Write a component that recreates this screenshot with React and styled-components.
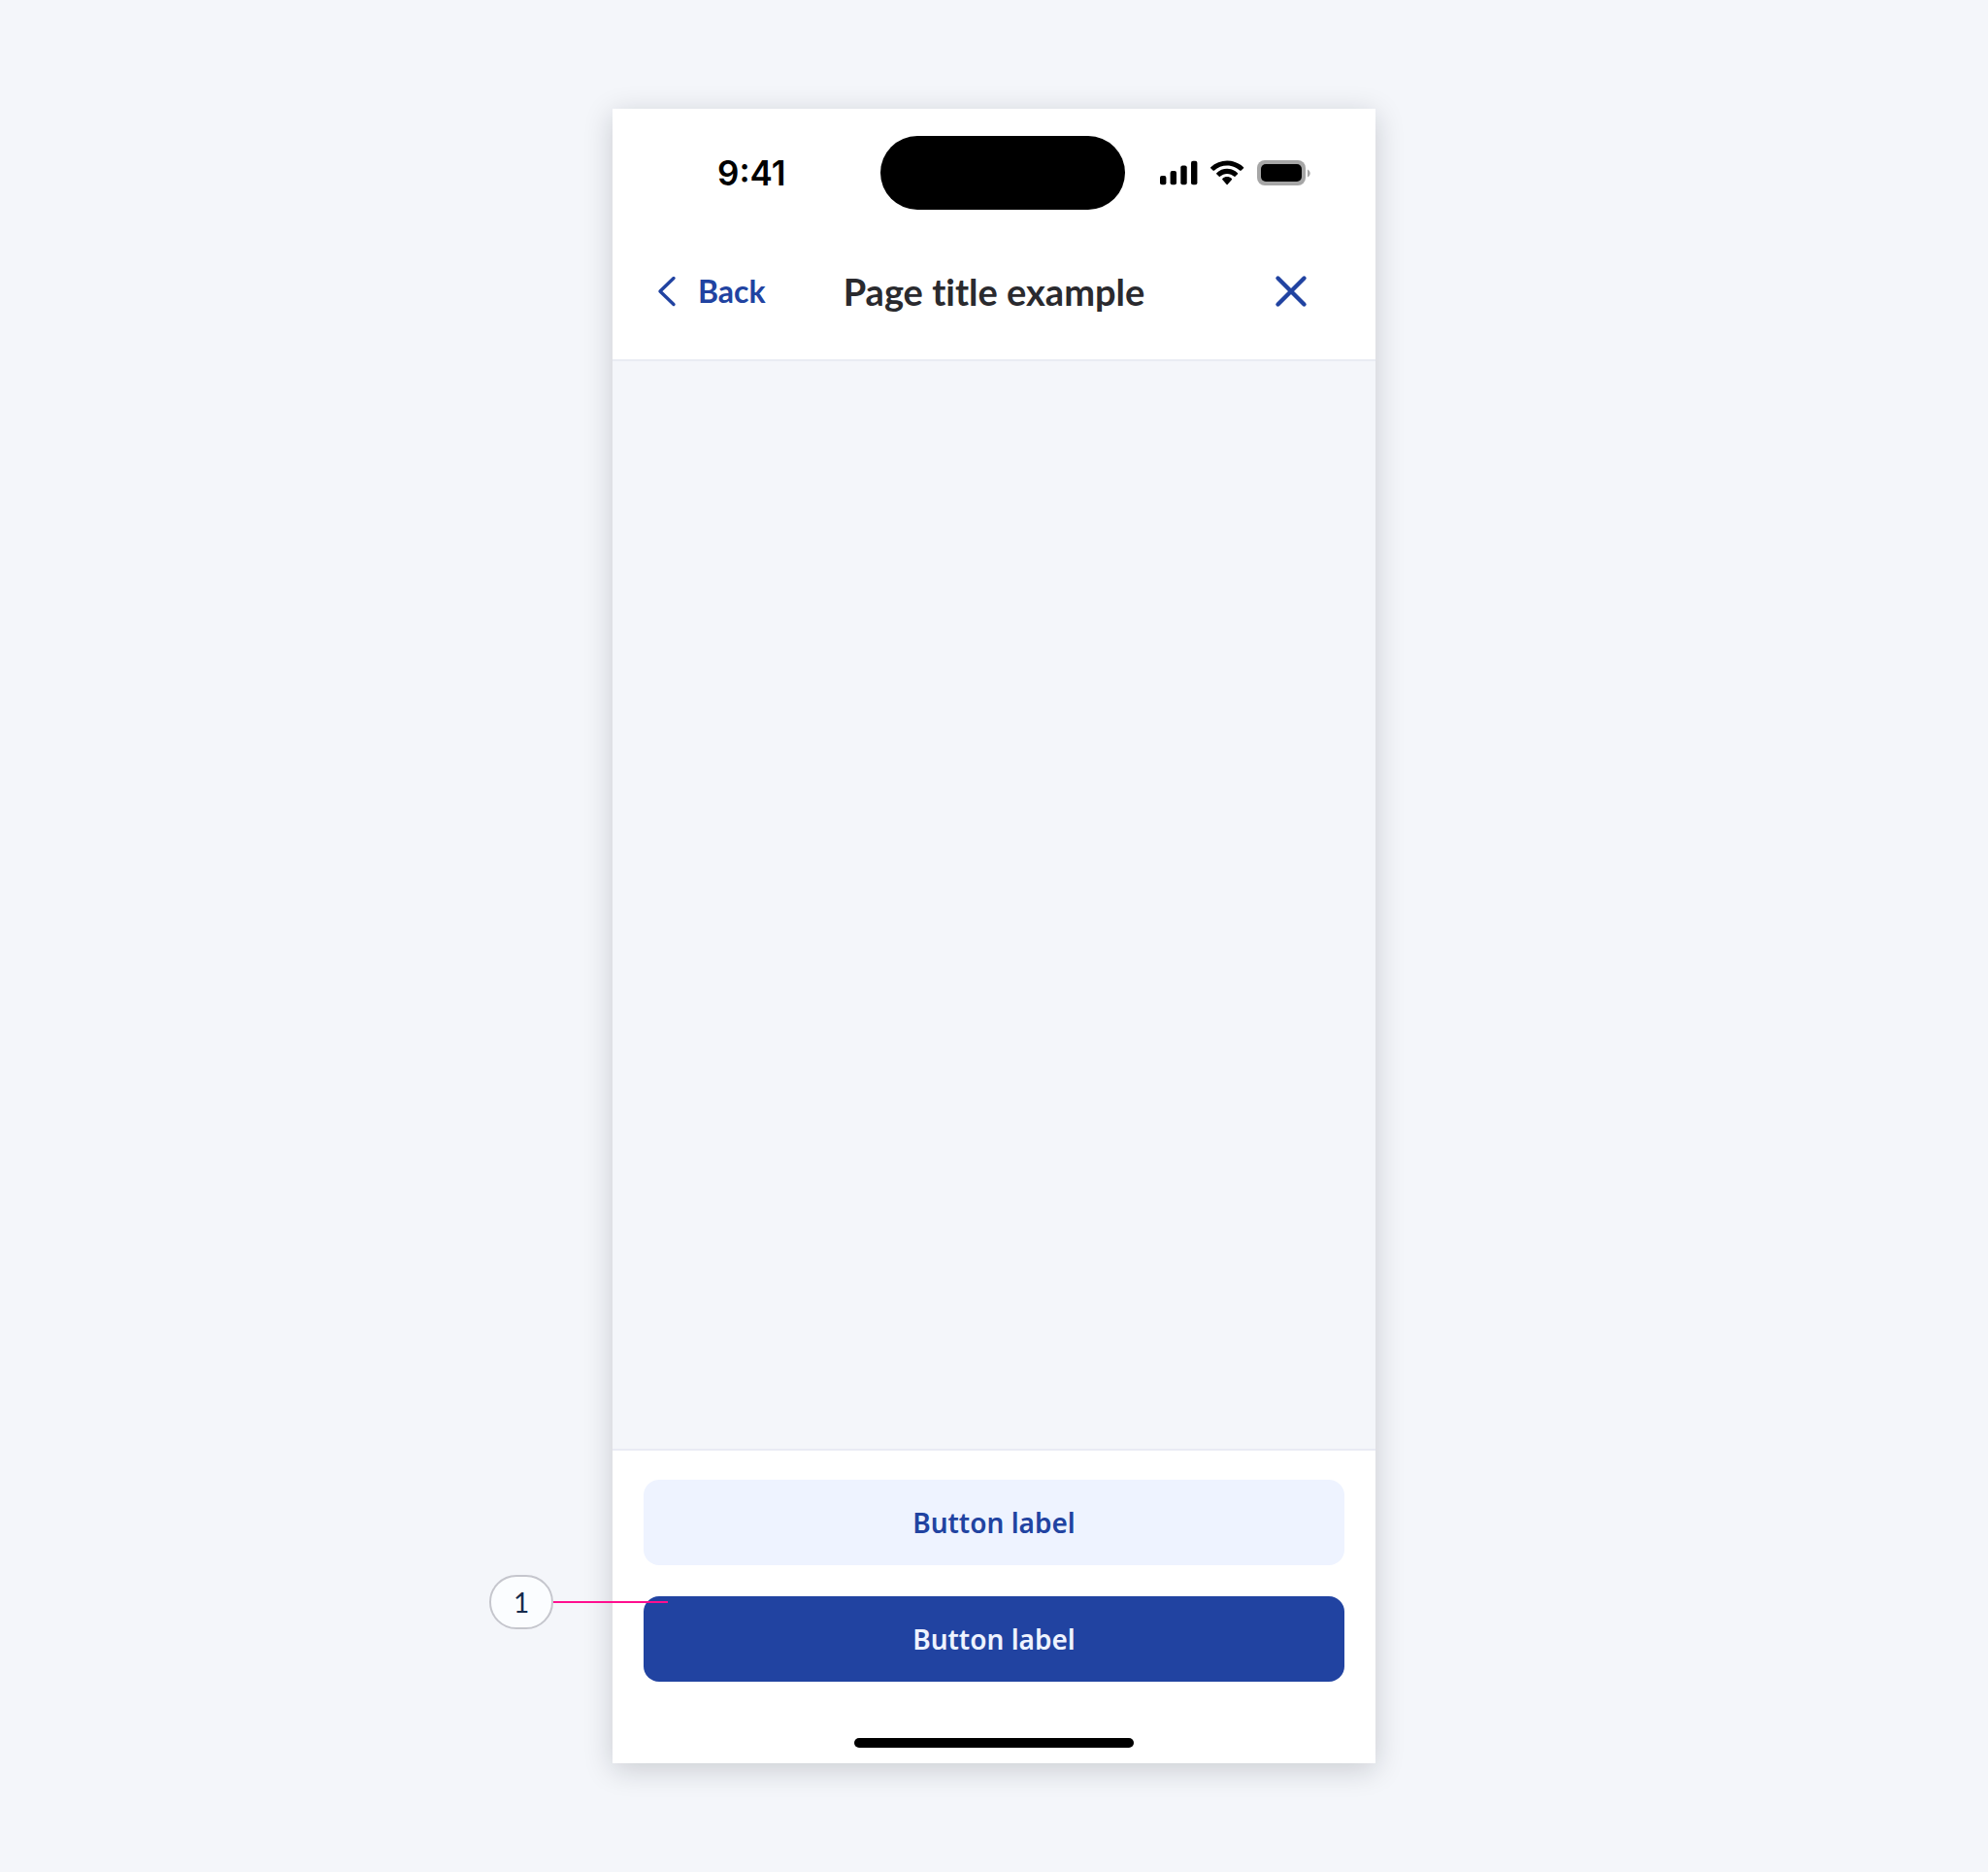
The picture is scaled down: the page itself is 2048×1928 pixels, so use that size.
import styled, { createGlobalStyle } from "styled-components";

const GlobalStyle = createGlobalStyle`
	* {
		box-sizing: border-box;
	}

	body {
		margin: 0;
		background-color: #f4f6fa;
		font-family: "Noto Sans", sans-serif;
	}
`;

const Page = styled.div`
	min-height: 100vh;
	padding: 112px 24px;
	display: flex;
	justify-content: center;
`;

const Phone = styled.main`
	width: 100%;
	max-width: 786px;
	display: flex;
	flex-direction: column;
	background-color: #f4f6fa;
	box-shadow: 0 6px 28px rgba(18, 22, 32, 0.19);
`;

const Header = styled.header`
	background-color: white;
	border-bottom: 2px solid #e9ecf3;
`;

const StatusBar = styled.div`
	display: grid;
	grid-template-columns: 276fr 252px 258fr;
	align-items: center;
	padding: 28px 0 14px;
`;

const Time = styled.time`
	padding-left: 108px;
	font-family: Inter, sans-serif;
	font-size: 35px;
	line-height: 40px;
	font-weight: 600;
	color: black;
`;

const Island = styled.div`
	height: 76px;
	border-radius: 38px;
	background-color: black;
`;

const StatusIcons = styled.div`
	display: flex;
	align-items: center;
	justify-content: flex-end;
	gap: 13px;
	padding-right: 67px;
`;

const NavBar = styled.nav`
	height: 140px;
	display: grid;
	grid-template-columns: 1fr auto 1fr;
	align-items: center;
	padding: 0 46px;
`;

const Title = styled.h1`
	margin: 0;
	font-family: Lato, sans-serif;
	font-size: 38px;
	line-height: 44px;
	font-weight: 700;
	font-variant-ligatures: none;
	color: #2a2a2e;
`;

const NavButton = styled.button`
	display: flex;
	align-items: center;
	gap: 22px;
	padding: 0;
	border: none;
	background: none;
	font-family: Lato, sans-serif;
	font-size: 32px;
	line-height: 40px;
	font-weight: 700;
	color: #2143a1;
	cursor: pointer;
`;

const CloseButton = styled(NavButton)`
	justify-self: end;
	padding-right: 23px;
`;

const Content = styled.section`
	flex: 1;
`;

const Footer = styled.footer`
	display: flex;
	flex-direction: column;
	gap: 32px;
	padding: 30px 32px 16px;
	background-color: white;
	border-top: 2px solid #e9ebf4;
`;

const ButtonSlot = styled.div`
	position: relative;
`;

const Button = styled.button`
	display: block;
	width: 100%;
	height: 88px;
	border: none;
	border-radius: 16px;
	background-color: ${(props) => (props.$primary ? "#2143a1" : "#eef3ff")};
	color: ${(props) => (props.$primary ? "#eef3ff" : "#2143a1")};
	font-family: "Noto Sans", sans-serif;
	font-size: 28px;
	line-height: 40px;
	font-weight: 600;
	cursor: pointer;
`;

const HomeIndicator = styled.div`
	width: 288px;
	height: 10px;
	margin: 26px auto 0;
	border-radius: 5px;
	background-color: black;
`;

const Callout = styled.div`
	position: absolute;
	top: -22px;
	left: -159px;
	display: flex;
	align-items: center;
`;

const CalloutNumber = styled.span`
	width: 66px;
	height: 56px;
	display: flex;
	align-items: center;
	justify-content: center;
	border: 2px solid #c5c6cd;
	border-radius: 28px;
	background-color: #fbfdff;
	font-family: Lato, sans-serif;
	font-size: 28px;
	line-height: 32px;
	color: #172b4d;
`;

const CalloutLine = styled.span`
	width: 118px;
	height: 2px;
	background-color: #ff0f8f;
`;

const SignalIcon = () => (
	<svg width="39" height="26" viewBox="0 0 39 26" aria-hidden="true">
		<rect x="0" y="16" width="6.4" height="9.2" rx="2" />
		<rect x="10.6" y="11" width="6.4" height="14.2" rx="2" />
		<rect x="21.3" y="5.6" width="6.4" height="19.6" rx="2" />
		<rect x="32" y="0.8" width="6.4" height="24.4" rx="2" />
	</svg>
);

const WifiIcon = () => (
	<svg width="35" height="26" viewBox="0 -0.3 17.5 13" aria-hidden="true">
		<path d="M8.5713 2.46628C11.0584 2.46639 13.4504 3.38847 15.2529 5.04195C15.3887 5.16961 15.6056 5.168 15.7393 5.03834L17.0368 3.77487C17.1045 3.70911 17.1422 3.62004 17.1417 3.52735C17.1411 3.43467 17.1023 3.34603 17.0338 3.28104C12.3028 -1.09368 4.83907 -1.09368 0.108056 3.28104C0.039524 3.34598 0.00064 3.4346 0 3.52728C-0.00062 3.61996 0.037048 3.70906 0.104689 3.77487L1.40255 5.03834C1.53615 5.1682 1.75327 5.16981 1.88893 5.04195C3.69167 3.38836 6.08395 2.46628 8.5713 2.46628Z" />
		<path d="M8.56795 6.68656C9.92527 6.68647 11.2341 7.19821 12.2403 8.12234C12.3763 8.25347 12.5907 8.25063 12.7234 8.11594L14.0106 6.79642C14.0784 6.72725 14.116 6.63332 14.1151 6.53578C14.1141 6.43824 14.0746 6.34519 14.0055 6.27738C10.9416 3.39102 6.19688 3.39102 3.13305 6.27738C3.06384 6.34519 3.02435 6.43829 3.02345 6.53587C3.02254 6.63345 3.06028 6.72735 3.12822 6.79642L4.41513 8.11594C4.54778 8.25063 4.76215 8.25347 4.89823 8.12234C5.90368 7.19882 7.21152 6.68713 8.56795 6.68656Z" />
		<path d="M11.0924 9.48011C11.0943 9.58546 11.0572 9.68703 10.9899 9.76084L8.81327 12.2156C8.74946 12.2877 8.66247 12.3283 8.5717 12.3283C8.48093 12.3283 8.39394 12.2877 8.33013 12.2156L6.15314 9.76084C6.08585 9.68697 6.04886 9.58537 6.05089 9.48002C6.05293 9.37467 6.09381 9.27486 6.16388 9.20415C7.55391 7.89295 9.58949 7.89295 10.9795 9.20415C11.0495 9.27492 11.0904 9.37476 11.0924 9.48011Z" />
	</svg>
);

const BatteryIcon = () => (
	<svg width="55" height="26" viewBox="0 0 55 26" aria-hidden="true">
		<rect width="50" height="26" rx="8" fill="#a6a6a6" />
		<rect x="4" y="4" width="42" height="18" rx="5" />
		<path
			d="M52 9.5v8.1c1.6-.7 2.7-2.3 2.7-4s-1.1-3.4-2.7-4.1z"
			fill="#a6a6a6"
		/>
	</svg>
);

const BackIcon = () => (
	<svg
		width="20"
		height="32"
		viewBox="0 0 20 32"
		fill="none"
		stroke="currentColor"
		strokeWidth="3.4"
		strokeLinecap="round"
		strokeLinejoin="round"
		aria-hidden="true"
	>
		<path d="M17 2.500L3 16l14 13.500" />
	</svg>
);

const CloseIcon = () => (
	<svg
		width="36"
		height="36"
		viewBox="0 0 36 36"
		fill="none"
		stroke="currentColor"
		strokeWidth="4.4"
		strokeLinecap="round"
		aria-hidden="true"
	>
		<path d="M4.500 4.500l27 27M31.500 4.500l-27 27" />
	</svg>
);

const App = () => {
	return (
		<Page>
			<GlobalStyle />
			<Phone>
				<Header>
					<StatusBar>
						<Time>9:41</Time>
						<Island />
						<StatusIcons>
							<SignalIcon />
							<WifiIcon />
							<BatteryIcon />
						</StatusIcons>
					</StatusBar>
					<NavBar>
						<NavButton>
							<BackIcon />
							Back
						</NavButton>
						<Title>Page title example</Title>
						<CloseButton aria-label="Close">
							<CloseIcon />
						</CloseButton>
					</NavBar>
				</Header>
				<Content />
				<Footer>
					<Button>Button label</Button>
					<ButtonSlot>
						<Button $primary>Button label</Button>
						<Callout>
							<CalloutNumber>1</CalloutNumber>
							<CalloutLine />
						</Callout>
					</ButtonSlot>
					<HomeIndicator />
				</Footer>
			</Phone>
		</Page>
	);
};

export default App;
